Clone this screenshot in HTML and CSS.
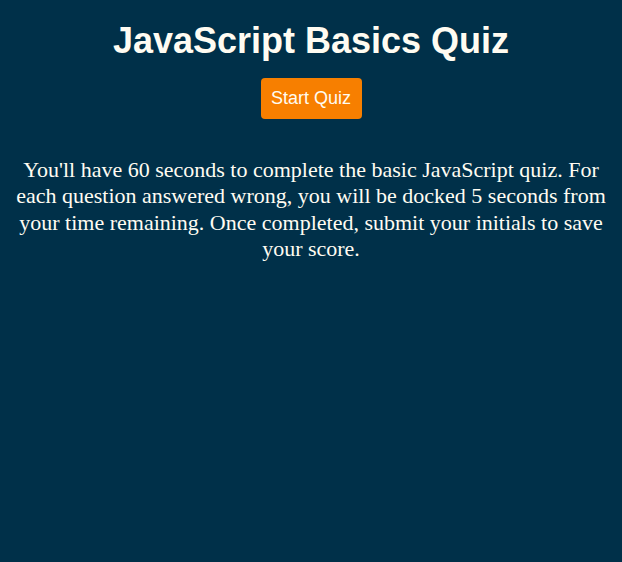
FILE: index.html
```html
<!DOCTYPE html>
<html>
<head>
<meta charset="utf-8">
<link rel="stylesheet" href="styles.css">
</head>
<body>
<main class="intro">
  <h1 class="title">JavaScript Basics Quiz</h1>
  <button class="start-btn">Start Quiz</button>
  <p class="desc">You'll have 60 seconds to complete the basic JavaScript quiz. For each question answered wrong, you will be docked 5 seconds from your time remaining. Once completed, submit your initials to save your score.</p>
</main>
</body>
</html>
```
FILE: styles.css
```css
html, body {
  margin: 0;
  padding: 0;
  background: #003049;
  height: 100%;
}
.intro {
  display: flex;
  flex-direction: column;
  align-items: center;
  padding: 0 12px;
  color: #fffcf2;
  text-align: center;
}
.title {
  font-family: "Liberation Sans", Arial, sans-serif;
  font-weight: bold;
  font-size: 36px;
  margin: 20px 0 16px;
}
.start-btn {
  font-family: "Liberation Sans", Arial, sans-serif;
  font-size: 18px;
  color: #fffcf2;
  background: #f77f00;
  border: none;
  border-radius: 4px;
  width: 101px;
  height: 41px;
  padding: 0;
}
.desc {
  font-family: "Liberation Serif", "Times New Roman", serif;
  font-size: 22px;
  line-height: 26.3px;
  margin: 38px 0 0;
}
```
